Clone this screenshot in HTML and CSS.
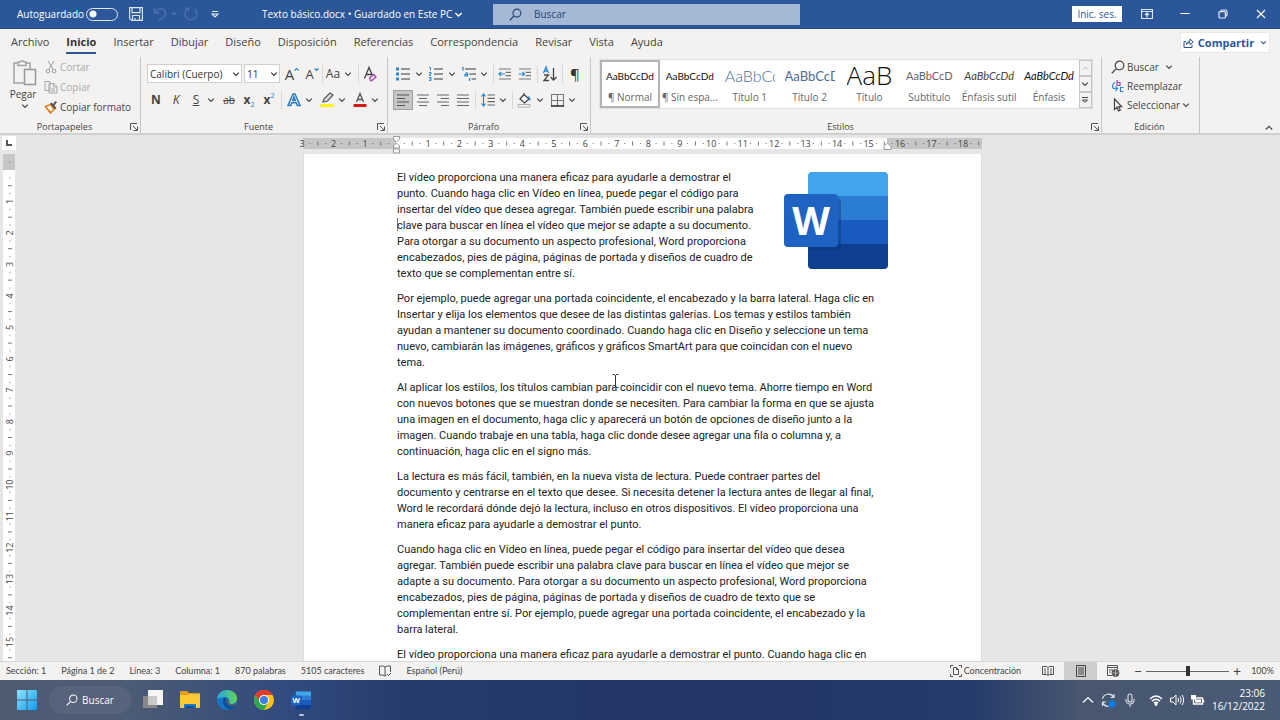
FILE: index.html
```html
<!DOCTYPE html>
<html lang="es">
<head>
<meta charset="utf-8">
<title>Texto básico.docx</title>
<link rel="stylesheet" href="styles.css">
</head>
<body>
<svg class="defs" aria-hidden="true">
  <symbol id="chev" viewBox="0 0 8 8"><path d="M1.2 2.6 4 5.4 6.8 2.6" fill="none" stroke="currentColor" stroke-width="1.2"/></symbol>
  <symbol id="launch" viewBox="0 0 8 8"><path d="M.5 7V.5H7M3 3l4 4M7.5 3.500v4h-4" fill="none" stroke="#555"/></symbol>
  <symbol id="lens" viewBox="0 0 14 14"><circle cx="8.500" cy="5.500" r="4.300" fill="none" stroke="currentColor" stroke-width="1.200"/><path d="M5.400 8.600.8 13.200" stroke="currentColor" stroke-width="1.300"/></symbol>
  <symbol id="wordlogo" viewBox="0 0 104 97">
    <clipPath id="sheet"><rect x="24" y="0" width="80" height="97" rx="4"/></clipPath>
    <g clip-path="url(#sheet)"><path fill="#41a5ee" d="M24 0h80v25H24z"/><path fill="#2b7cd3" d="M24 24h80v25H24z"/><path fill="#185abd" d="M24 48h80v25H24z"/><path fill="#103f91" d="M24 72h80v25H24z"/><path fill="#0b2f6e" opacity=".4" d="M24 26h29a4 4 0 0 1 4 4v44a4 4 0 0 1-4 4H24z"/></g>
    <rect y="22" width="54" height="53" rx="4" fill="#1f63c2"/>
    <text x="27" y="63" text-anchor="middle" font-family="Open Sans, sans-serif" font-weight="700" font-size="39" fill="#fff">W</text>
  </symbol>
</svg>

<header class="titlebar">
  <label class="autosave"><span>Autoguardado</span><input type="checkbox" class="toggle"></label>
  <div class="quick">
    <button aria-label="Guardar"><svg width="14" height="14" viewBox="0 0 14 14" fill="none" stroke="#d9e3f3" stroke-width="1.200"><path d="M.6.6h12.800v12.800H2.600L.6 11.400zM3 .6v5h8v-5M3.500 13.400V8.500h7v4.900M6 11v2"/></svg></button>
    <button aria-label="Deshacer" class="dim undo"><svg width="24" height="14" viewBox="0 0 24 14" fill="none" stroke="currentColor" stroke-width="1.300"><path d="M1.500 1v5h5M1.500 6C4 1.500 9 .5 11.500 3.500s1 6-5.500 10M19 5.500l2 2 2-2"/></svg></button>
    <button aria-label="Rehacer" class="dim"><svg width="14" height="14" viewBox="0 0 14 14" fill="none" stroke="currentColor" stroke-width="1.300"><path d="M4 1.500A6 6 0 1 0 10.500 2M1 1.200h3.500v3.500"/></svg></button>
    <button aria-label="Personalizar" class="more"><svg width="8" height="8" viewBox="0 0 8 8" fill="none" stroke="#e4ebf6" stroke-width="1.100"><path d="M1 1.500h6M1 4l3 3 3-3z"/></svg></button>
  </div>
  <button class="doctitle">Texto básico.docx • Guardado en Este PC <svg width="9" height="9"><use href="#chev"/></svg></button>
  <label class="search"><svg width="13" height="13"><use href="#lens"/></svg><input type="text" placeholder="Buscar" aria-label="Buscar"></label>
  <div class="window">
    <button class="signin">Inic. ses.</button>
    <button aria-label="Opciones de cinta"><svg width="12" height="10" viewBox="0 0 12 10" fill="none" stroke="#dce6f4"><path d="M.5.5h11v9H.5zM.5 2.500h11M6 8.500v-4M4 6l2-2 2 2" stroke-width="1.200"/></svg></button>
    <button aria-label="Minimizar"><svg width="10" height="10" viewBox="0 0 10 10"><path d="M.5 4.500h9" stroke="#fff"/></svg></button>
    <button aria-label="Restaurar"><svg width="10" height="10" viewBox="0 0 10 10" fill="none" stroke="#e4ebf6" stroke-width="1.200"><rect x="1" y="2.600" width="6.400" height="6.400" rx="1"/><path d="M3 2.500V1.700Q3 1 4 1h3.500Q9 1 9 2.500V6q0 1-1 1"/></svg></button>
    <button aria-label="Cerrar"><svg width="10" height="10" viewBox="0 0 10 10"><path d="m1 1 8 8M9 1 1 9" stroke="#fff" stroke-width="1.100"/></svg></button>
  </div>
</header>

<nav class="tabs">
  <a href="#archivo">Archivo</a><a href="#inicio" class="active">Inicio</a><a href="#insertar">Insertar</a><a href="#dibujar">Dibujar</a><a href="#diseno">Diseño</a><a href="#disposicion">Disposición</a><a href="#referencias">Referencias</a><a href="#correspondencia">Correspondencia</a><a href="#revisar">Revisar</a><a href="#vista">Vista</a><a href="#ayuda">Ayuda</a>
  <button class="share"><svg width="11" height="11" viewBox="0 0 11 11" fill="none" stroke="#2b579a"><path d="M3 4.500H1v6h8v-3M3.500 7.500C3.500 5 5 4 7 4V2l3.300 3L7 7.500v-2C5.500 5.500 4.500 6 3.500 7.500z"/></svg>Compartir<svg class="sharechev" width="7" height="7"><use href="#chev"/></svg></button>
</nav>

<section class="ribbon">
  <div class="group clipboard">
    <div class="body">
      <button class="paste"><svg width="26" height="27" viewBox="0 0 26 27" fill="#f3f2f1" stroke="#a3a3a3" stroke-width="1.500"><path d="M2 4h16v20H2z"/><path d="M6 6.500V3h2a2.200 2.200 0 0 1 4 0h2v3.500z"/><path d="M12.500 10.500h11v15h-11z" stroke="#999"/></svg>Pegar<svg width="8" height="8"><use href="#chev"/></svg></button>
      <div class="stack">
        <button class="off"><svg width="14" height="14" viewBox="0 0 14 14" fill="none" stroke="#a6a6a6" stroke-width="1.100"><path d="m4 1 5 8M10 1 5 9"/><circle cx="4" cy="11" r="1.800"/><circle cx="10" cy="11" r="1.800"/></svg>Cortar</button>
        <button class="off"><svg width="14" height="14" viewBox="0 0 14 14" fill="#f3f2f1" stroke="#a6a6a6"><path d="M1 1.500h5v9H1zM5 3.500h5l3 3v6.500H5zM9.500 3.500V7H13M7 9h4M7 11h4"/></svg>Copiar</button>
        <button><svg width="14" height="14" viewBox="0 0 14 14"><path d="m1.500 6.500 5-2 3.500 5-3.500 3.500z" fill="#fff" stroke="#e07b1f" stroke-width="1.500"/><path d="m2 8 5 4" stroke="#e07b1f"/><path d="m6 3.500 5 6 1.500-1.500-2-2.500L13 2l-1.500-1L9 4 7.500 2.500z" fill="#555"/></svg>Copiar formato</button>
      </div>
    </div>
    <footer><span>Portapapeles</span><button class="launch" aria-label="Portapapeles"><svg width="8" height="8"><use href="#launch"/></svg></button></footer>
  </div>

  <div class="group font">
    <div class="body rows">
      <div class="row">
        <span class="combo family"><select aria-label="Fuente"><option>Calibri (Cuerpo)</option></select><svg width="8" height="8"><use href="#chev"/></svg></span>
        <span class="combo size"><select aria-label="Tamaño"><option>11</option></select><svg width="8" height="8"><use href="#chev"/></svg></span>
        <button class="ic grow">A<svg width="5" height="5" viewBox="0 0 5 5"><path d="M.5 3.500 2.500 1.500l2 2" fill="none" stroke="#2a86cf" stroke-width="1.200"/></svg></button>
        <button class="ic grow small">A<svg width="5" height="5" viewBox="0 0 5 5"><path d="M.5 1.500l2 2 2-2" fill="none" stroke="#2a86cf" stroke-width="1.200"/></svg></button>
        <i class="sep"></i>
        <button class="ic">Aa</button><button class="dd" aria-label="Más"><svg width="8" height="8"><use href="#chev"/></svg></button>
        <i class="sep gap"></i>
        <button class="ic" aria-label="Borrar formato"><svg width="20" height="20" viewBox="0 0 20 20"><path d="M3.500 14.500 8 3.500l3.500 8M5.500 10.500h5" fill="none" stroke="#444" stroke-width="1.300"/><path d="m8.500 14 4-3.500 2.500 2.500-4 3.500H9.500z" fill="#f3f2f1" stroke="#a646b5" stroke-width="1.300"/></svg></button>
      </div>
      <div class="row">
        <button class="ic"><b>N</b></button><button class="ic"><em>K</em></button><button class="ic"><u>S</u></button><button class="dd" aria-label="Más"><svg width="8" height="8"><use href="#chev"/></svg></button>
        <button class="ic strike"><s>ab</s></button><button class="ic script"><b>x</b><sub>2</sub></button><button class="ic script"><b>x</b><sup>2</sup></button>
        <i class="sep gap"></i>
        <button class="ic" aria-label="Efectos"><svg width="20" height="20" viewBox="0 0 20 20"><path d="m4 15.500 5-11.500h2l5 11.500h-2.700l-1-2.800H7.700l-1 2.800zM8.700 10.500h2.600L10 7z" fill="#fff" stroke="#2a79c4" stroke-width="1.500"/></svg></button><button class="dd" aria-label="Más"><svg width="8" height="8"><use href="#chev"/></svg></button>
        <button class="ic" aria-label="Resaltar"><svg width="20" height="20" viewBox="0 0 20 20"><path d="m6 12 1-3 6-6 3 2-5.500 6L6 12z" fill="#ddd" stroke="#555" stroke-width="1.200"/><path d="M3.500 14h13v3h-13z" fill="#fbf512"/></svg></button><button class="dd" aria-label="Más"><svg width="8" height="8"><use href="#chev"/></svg></button>
        <button class="ic" aria-label="Color de fuente"><svg width="20" height="20" viewBox="0 0 20 20"><path d="m6.500 12 3.500-8.500 3.500 8.500M7.500 9.500h5" fill="none" stroke="#555" stroke-width="1.300"/><path d="M3.500 14h13v3h-13z" fill="#d11a1a"/></svg></button><button class="dd" aria-label="Más"><svg width="8" height="8"><use href="#chev"/></svg></button>
      </div>
    </div>
    <footer><span>Fuente</span><button class="launch" aria-label="Fuente"><svg width="8" height="8"><use href="#launch"/></svg></button></footer>
  </div>

  <div class="group para">
    <div class="body rows">
      <div class="row">
        <button class="ic" aria-label="Viñetas"><svg width="20" height="20" viewBox="0 0 20 20"><path d="M3 3.500h3v3H3zM3 8.500h3v3H3zM3 13.500h3v3H3z" fill="#2a86cf"/><path d="M8 5h9M8 10h9M8 15h9" stroke="#777" stroke-width="1.300"/></svg></button><button class="dd w12" aria-label="Más"><svg width="8" height="8"><use href="#chev"/></svg></button>
        <button class="ic" aria-label="Numeración"><svg width="20" height="20" viewBox="0 0 20 20"><path d="M3 3.500h1.500v3M3 8.500h2V10H3.500v1.500H5M3 13.500h2v3H3M3.500 15H5" fill="none" stroke="#2a86cf"/><path d="M8 5h9M8 10h9M8 15h9" stroke="#777" stroke-width="1.300"/></svg></button><button class="dd w12" aria-label="Más"><svg width="8" height="8"><use href="#chev"/></svg></button>
        <button class="ic" aria-label="Lista multinivel"><svg width="20" height="20" viewBox="0 0 20 20"><path d="M3 3.500h1v3M6 9h2.500v3H6v-1.500h2M10.500 14v3" fill="none" stroke="#2a86cf" stroke-width="1.200"/><path d="M6 5h11M10.500 10H17M12.500 15H17" stroke="#777" stroke-width="1.300"/></svg></button><button class="dd" aria-label="Más"><svg width="8" height="8"><use href="#chev"/></svg></button>
        <i class="sep slim"></i>
        <button class="ic" aria-label="Disminuir sangría"><svg width="20" height="20" viewBox="0 0 20 20"><path d="M4 5h12M10.500 8.300H16M10.500 11.700H16M4 15h12" stroke="#777" stroke-width="1.200"/><path d="M10 10H4m2.200-2.200L4 10l2.200 2.200" fill="none" stroke="#2a86cf" stroke-width="1.200"/></svg></button><button class="ic" aria-label="Aumentar sangría"><svg width="20" height="20" viewBox="0 0 20 20"><path d="M4 5h12M10.500 8.300H16M10.500 11.700H16M4 15h12" stroke="#777" stroke-width="1.200"/><path d="M3.500 10h6M7.300 7.800 9.500 10l-2.200 2.200" fill="none" stroke="#2a86cf" stroke-width="1.200"/></svg></button>
        <i class="sep gap"></i>
        <button class="ic" aria-label="Ordenar"><svg width="20" height="20" viewBox="0 0 20 20" fill="none" stroke-width="1.300"><path d="m3.500 9 2.500-6 2.500 6M4.500 7h3" stroke="#2a86cf"/><path d="M4 11h4.500L4 16.500h5" stroke="#444"/><path d="M13.500 4v12m-3-3 3 3 3-3" stroke="#444"/></svg></button>
        <i class="sep gap"></i>
        <button class="ic pil">¶</button>
      </div>
      <div class="row">
        <button class="ic on" aria-label="Izquierda"><svg width="18" height="18" viewBox="0 0 18 18"><path d="M3 4h12M3 7.500h8M3 11h12M3 14.500h8" stroke="#555" stroke-width="1.200"/></svg></button><button class="ic" aria-label="Centrar"><svg width="18" height="18" viewBox="0 0 18 18"><path d="M3 4h12M5 7.500h8M3 11h12M5 14.500h8" stroke="#666" stroke-width="1.200"/></svg></button><button class="ic" aria-label="Derecha"><svg width="18" height="18" viewBox="0 0 18 18"><path d="M3 4h12M7 7.500h8M3 11h12M7 14.500h8" stroke="#666" stroke-width="1.200"/></svg></button><button class="ic" aria-label="Justificar"><svg width="18" height="18" viewBox="0 0 18 18"><path d="M3 4h12M3 7.500h12M3 11h12M3 14.500h12" stroke="#666" stroke-width="1.200"/></svg></button>
        <i class="sep gap"></i>
        <button class="ic" aria-label="Interlineado"><svg width="20" height="20" viewBox="0 0 20 20" fill="none"><path d="M5.500 4.500v11M3.500 6.500l2-2.500 2 2.500M3.500 13.500l2 2.500 2-2.500" stroke="#2a86cf" stroke-width="1.200"/><path d="M9.500 5H17M9.500 8.300H17M9.500 11.700H17M9.500 15H17" stroke="#666" stroke-width="1.200"/></svg></button><button class="dd" aria-label="Más"><svg width="8" height="8"><use href="#chev"/></svg></button>
        <i class="sep slim"></i>
        <button class="ic" aria-label="Sombreado"><svg width="20" height="20" viewBox="0 0 20 20"><path d="m6 9 4-4.500 5 4.500-4.500 4zM10 4.500V3" fill="#fff" stroke="#444" stroke-width="1.300"/><path d="M14 6q3 1 2.500 5-2-1-2.500-5z" fill="#2a86cf"/><path d="M4 14.500h12v2.500H4z" fill="#fff" stroke="#aaa"/></svg></button><button class="dd w12" aria-label="Más"><svg width="8" height="8"><use href="#chev"/></svg></button>
        <button class="ic" aria-label="Bordes"><svg width="20" height="20" viewBox="0 0 20 20" fill="none"><path d="M4.500 16V4.500h12V16M10.500 4.500V16M4.500 10.500h12" stroke="#777" stroke-width="1.100"/><path d="M4 16h13" stroke="#333" stroke-width="1.600"/></svg></button><button class="dd" aria-label="Más"><svg width="8" height="8"><use href="#chev"/></svg></button>
      </div>
    </div>
    <footer><span>Párrafo</span><button class="launch" aria-label="Párrafo"><svg width="8" height="8"><use href="#launch"/></svg></button></footer>
  </div>

  <div class="group styles">
    <div class="body">
      <div class="gallery">
        <button class="sel"><span class="sample">AaBbCcDd</span><span>¶ Normal</span></button>
        <button><span class="sample">AaBbCcDd</span><span>¶ Sin espa...</span></button>
        <button><span class="sample h1">AaBbCc</span><span>Título 1</span></button>
        <button><span class="sample h2">AaBbCcD</span><span>Título 2</span></button>
        <button><span class="sample big">AaB</span><span>Título</span></button>
        <button><span class="sample subt">AaBbCcD</span><span>Subtítulo</span></button>
        <button><span class="sample soft">AaBbCcDd</span><span>Énfasis sutil</span></button>
        <button><span class="sample emph">AaBbCcDd</span><span>Énfasis</span></button>
        <div class="scroll">
          <button aria-label="Arriba" class="off"><svg width="7" height="7" viewBox="0 0 8 8"><path d="M1.500 5 4 2.500 6.500 5" fill="none" stroke="currentColor"/></svg></button>
          <button aria-label="Abajo"><svg width="8" height="8"><use href="#chev"/></svg></button>
          <button aria-label="Más estilos"><svg width="8" height="8" viewBox="0 0 8 8" fill="none" stroke="#444"><path d="M1 1.500h6M1.500 4 4 6.500 6.500 4z"/></svg></button>
        </div>
      </div>
    </div>
    <footer><span>Estilos</span><button class="launch" aria-label="Estilos"><svg width="8" height="8"><use href="#launch"/></svg></button></footer>
  </div>

  <div class="group edit">
    <div class="body stack">
      <button><svg width="14" height="14"><use href="#lens"/></svg>Buscar<svg class="far" width="8" height="8"><use href="#chev"/></svg></button>
      <button><svg width="14" height="14" viewBox="0 0 14 14" fill="none" stroke-width="1.200"><path d="M6 1v5.500h3v-3H6" stroke="#a646b5"/><path d="M4 3.500C1 5 1 8 2.500 9.500H6M4.500 7.500l2 2-2 2.500M12.500 8.500h-3v4h3" stroke="#2a86cf"/></svg>Reemplazar</button>
      <button><svg width="14" height="14" viewBox="0 0 14 14" fill="none" stroke="#444" stroke-width="1.200"><path d="M3.500 1v10.500L6 9.300l1.500 3.700 1.800-.8-1.600-3.500h3z"/></svg>Seleccionar<svg width="8" height="8"><use href="#chev"/></svg></button>
    </div>
    <footer><span>Edición</span></footer>
  </div>
  <button class="collapse" aria-label="Contraer cinta"><svg width="8" height="8" viewBox="0 0 8 8"><path d="M.8 5.500 4 2.300l3.200 3.200" fill="none" stroke="#444" stroke-width="1.200"/></svg></button>
</section>

<main class="workspace">
  <aside>
    <button class="tabstop" aria-label="Tabulación"><svg width="6" height="6" viewBox="0 0 6 6"><path d="M1 0v5h5" fill="none" stroke="#555" stroke-width="2"/></svg></button>
    <svg class="vruler" id="vruler"></svg>
  </aside>
  <div class="canvas">
    <div class="hruler"><svg id="hruler"></svg></div>
    <article class="page">
      <svg class="picture" width="104" height="97" role="img" aria-label="Word"><use href="#wordlogo"/></svg>
      <p>El vídeo proporciona una manera eficaz para ayudarle a demostrar el<br>punto. Cuando haga clic en Vídeo en línea, puede pegar el código para<br>insertar del vídeo que desea agregar. También puede escribir una palabra<br><span class="caret"></span>clave para buscar en línea el vídeo que mejor se adapte a su documento.<br>Para otorgar a su documento un aspecto profesional, Word proporciona<br>encabezados, pies de página, páginas de portada y diseños de cuadro de<br>texto que se complementan entre sí.</p>
      <p>Por ejemplo, puede agregar una portada coincidente, el encabezado y la barra lateral. Haga clic en<br>Insertar y elija los elementos que desee de las distintas galerías. Los temas y estilos también<br>ayudan a mantener su documento coordinado. Cuando haga clic en Diseño y seleccione un tema<br>nuevo, cambiarán las imágenes, gráficos y gráficos SmartArt para que coincidan con el nuevo<br>tema.</p>
      <p>Al aplicar los estilos, los títulos cambian para coincidir con el nuevo tema. Ahorre tiempo en Word<br>con nuevos botones que se muestran donde se necesiten. Para cambiar la forma en que se ajusta<br>una imagen en el documento, haga clic y aparecerá un botón de opciones de diseño junto a la<br>imagen. Cuando trabaje en una tabla, haga clic donde desee agregar una fila o columna y, a<br>continuación, haga clic en el signo más.</p>
      <p>La lectura es más fácil, también, en la nueva vista de lectura. Puede contraer partes del<br>documento y centrarse en el texto que desee. Si necesita detener la lectura antes de llegar al final,<br>Word le recordará dónde dejó la lectura, incluso en otros dispositivos. El vídeo proporciona una<br>manera eficaz para ayudarle a demostrar el punto.</p>
      <p>Cuando haga clic en Vídeo en línea, puede pegar el código para insertar del vídeo que desea<br>agregar. También puede escribir una palabra clave para buscar en línea el vídeo que mejor se<br>adapte a su documento. Para otorgar a su documento un aspecto profesional, Word proporciona<br>encabezados, pies de página, páginas de portada y diseños de cuadro de texto que se<br>complementan entre sí. Por ejemplo, puede agregar una portada coincidente, el encabezado y la<br>barra lateral.</p>
      <p>El vídeo proporciona una manera eficaz para ayudarle a demostrar el punto. Cuando haga clic en</p>
      <svg class="ibeam" width="7" height="14" viewBox="0 0 7 14"><path d="M.5.5h2l1 1 1-1h2M3.500 1v12M.5 13.500h2l1-1 1 1h2" fill="none" stroke="#333"/></svg>
    </article>
  </div>
</main>

<footer class="status">
  <span>Sección: 1</span><span>Página 1 de 2</span><span>Línea: 3</span><span>Columna: 1</span><span>870 palabras</span><span>5105 caracteres</span>
  <svg width="12" height="12" viewBox="0 0 12 12" fill="none" stroke="#555"><path d="M6 2Q4 .5.500 1v9Q4 9.500 6 11V2Q8 .5 11.500 1v6M6 11l1.500-1M8 9l1.500 1.500L12 8"/></svg><span>Español (Perú)</span>
  <div class="views">
    <button class="focus"><svg width="12" height="12" viewBox="0 0 12 12" fill="none" stroke="#555"><path d="M.5 3V.5H3M.5 9v2.500H3M9 .5h2.500V3M9 11.500h2.500V9M3.500 2.500h3l2 2v5h-5zM6.500 2.500v2h2"/></svg>Concentración</button>
    <button class="view" aria-label="Lectura"><svg width="12" height="12" viewBox="0 0 12 12" fill="none" stroke="#555"><path d="M.5 1.500H5l1 1 1-1h4.500v8H7l-1 1-1-1H.5zM6 2.500v8M2 4h2M2 6h2M2 8h2M8 4h2M8 6h2M8 8h2"/></svg></button>
    <button class="view on" aria-label="Impresión"><svg width="10" height="12" viewBox="0 0 10 12" fill="none" stroke="#444"><path d="M.5.5h9v11h-9zM2 3h6M2 5h6M2 7h6M2 9h6"/></svg></button>
    <button class="view" aria-label="Web"><svg width="13" height="12" viewBox="0 0 13 12" fill="none" stroke="#555"><path d="M5 10.500H.5v-10h10V4M.5 2.500h10M2 5h4M2 7h2"/><circle cx="8.500" cy="8" r="3.500" fill="#555"/><path d="M5.500 8h6M8.500 5v6" stroke="#ccc" stroke-width=".7"/></svg></button>
    <button class="zoom">−</button><input type="range" class="slider" aria-label="Zoom" min="0" max="100" value="50"><button class="zoom">+</button><span class="pct">100%</span>
  </div>
</footer>

<footer class="taskbar">
  <button aria-label="Inicio"><svg width="20" height="20" viewBox="0 0 20 20"><defs><linearGradient id="win" x2="1" y2="1"><stop stop-color="#8be3ff"/><stop offset="1" stop-color="#129cee"/></linearGradient></defs><path d="M0 1q0-1 1-1h8.500v9.500H0zM10.500 0H19q1 0 1 1v8.500h-9.500zM0 10.500h9.500V20H1q-1 0-1-1zM10.500 10.500H20V19q0 1-1 1h-8.500z" fill="url(#win)"/></svg></button>
  <button class="find"><svg width="12" height="12"><use href="#lens"/></svg>Buscar</button>
  <div class="apps">
    <button aria-label="Vista de tareas"><svg width="20" height="20" viewBox="0 0 20 20"><path d="M5 0h15v15H5z" fill="#f5f5f5"/><path d="M0 6h14v12H0z" fill="#888"/><path d="M5 6h9v9H5z" fill="#c9c9c9"/></svg></button>
    <button aria-label="Explorador"><svg width="20" height="20" viewBox="0 0 20 20"><path d="M0 2q0-1 1-1h6l2 2h10q1 0 1 1v5H0z" fill="#e0a012"/><path d="M0 5h8l2-1h10v13q0 1-1 1H1q-1 0-1-1z" fill="#fcc934"/><path d="M4 18v-3q0-1 1-1h10q1 0 1 1v3z" fill="#1976c5"/><path d="M6 16h8v2H6z" fill="#0b4f8f"/></svg></button>
    <button aria-label="Edge"><svg width="20" height="20" viewBox="0 0 20 20"><defs><linearGradient id="edge"><stop stop-color="#27a5e8"/><stop offset="1" stop-color="#65d65a"/></linearGradient></defs><circle cx="10" cy="10" r="10" fill="#1576c7"/><path d="M0 9C1 3 5 0 10 0c6 0 10 4 10 8.500 0 4-3 5.500-6 5.500-2.500 0-2.500-1-2-2 1-2-.5-5-4-5-3 0-6 1-8 2z" fill="url(#edge)"/><path d="M8 7C4 10 6 18 13 19.500c3-.7 5-2.500 6-4.500-4 2-9 1-10-3-.3-2 .5-3 .5-3z" fill="#0c4f9b"/><path d="M9.500 9C8 11 9 14 12 15.500c3 1 5 .5 7-.5l.5-2C17 14.500 12.500 14.500 12 12.500 12.500 11 11 9 9.500 9z" fill="#4c5c75"/></svg></button>
    <button aria-label="Chrome"><svg width="20" height="20" viewBox="0 0 20 20"><circle cx="10" cy="10" r="10" fill="#fbc116"/><path d="M1.300 5A10 10 0 0 1 18.700 5H10a5 5 0 0 0-4.300 7.500z" fill="#e33b2e"/><path d="M1.300 5A10 10 0 0 0 10 20l4.300-7.500a5 5 0 0 1-8.600 0z" fill="#2da94f"/><circle cx="10" cy="10" r="5" fill="#fff"/><circle cx="10" cy="10" r="4" fill="#3b7ded"/></svg></button>
    <button aria-label="Word" class="running"><svg width="20" height="19"><use href="#wordlogo"/></svg></button>
  </div>
  <div class="tray">
    <svg width="12" height="12" viewBox="0 0 12 12"><path d="m1 8.500 5-5 5 5" fill="none" stroke="#fff" stroke-width="1.200"/></svg>
    <svg width="15" height="15" viewBox="0 0 15 15" fill="none" stroke="#dde2ea" stroke-width="1.200"><path d="M1.500 6A6 6 0 0 1 12.500 4M13 1v3.500H9.500M1.500 9q1 4 6 4.500M1.500 13V9H5"/><circle cx="11" cy="11" r="3.200" fill="#0f7be0" stroke="#0f7be0"/></svg>
    <svg class="mic" width="10" height="14" viewBox="0 0 10 14" fill="none" stroke="#dde2ea" stroke-width="1.100"><rect x="3" y="1" width="4" height="8" rx="2"/><path d="M.8 6q0 5 4.200 5t4.200-5M5 11v3"/></svg>
    <svg width="14" height="12" viewBox="0 0 14 12" fill="none" stroke="#fff" stroke-width="1.300"><path d="M1 5q6-6 12 0M3 7.300q4-4 8 0M5 9.300q2-2 4 0"/><circle cx="7" cy="10.500" r=".8" fill="#fff"/></svg>
    <svg width="14" height="12" viewBox="0 0 14 12" fill="none" stroke="#fff"><path d="M.5 4h2.500L6 1v10L3 8H.5zM8 4q1.200 2 0 4M10 2.500q2.500 3.500 0 7M12 1q3.300 5 0 10"/></svg>
    <svg width="14" height="12" viewBox="0 0 14 12"><path d="M2.500 4h9v6h-9zM12.500 5.500v3" fill="none" stroke="#fff" stroke-width="1.300"/><path d="M4 5.500h6v3H4zM0 1h5v4.500H0z" fill="#fff"/></svg>
    <time>23:06<br>16/12/2022</time>
  </div>
</footer>
<script src="ruler.js"></script>
</body>
</html>
```
FILE: styles.css
```css
* { box-sizing: border-box; }
body { margin: 0; height: 100vh; overflow: hidden; display: flex; flex-direction: column; font: 10px/16px "Open Sans", "Noto Sans", sans-serif; color: #444; background: #e6e6e6; }
button, input, select { font: inherit; color: inherit; border: 0; background: none; padding: 0; margin: 0; }
button { display: flex; align-items: center; justify-content: center; white-space: nowrap; }
svg { flex: none; display: block; }
.defs { position: absolute; width: 0; height: 0; }

.titlebar { flex: none; height: 29px; background: #2b579a; border-bottom: 1px solid #244c8a; display: flex; align-items: center; color: #fff; padding-left: 17px; }
.autosave { display: flex; align-items: center; width: 101px; white-space: nowrap; }
.toggle { appearance: none; margin-left: auto; width: 32px; height: 13px; border: 1px solid #dfe7f3; border-radius: 7px; background: radial-gradient(circle at 6px 5px, #fff 3px, transparent 4px); }
.quick { display: flex; align-items: center; margin-left: 11px; width: 133px; }
.quick .undo { margin: 0 7px 0 10px; }
.quick .more { margin-left: 13px; }
.dim { color: #4c72ad; }
.doctitle { width: 197px; justify-content: flex-start; gap: 2px; }
.search { flex: 0 1 307px; margin-left: 34px; height: 21px; background: #a5b9d7; color: #27436f; display: flex; align-items: center; padding-left: 16px; gap: 12px; }
.search input { flex: 1; min-width: 0; outline: 0; }
.search input::placeholder { color: #27436f; opacity: 1; }
.window { margin-left: auto; display: flex; align-items: center; }
.window button { width: 38px; }
.window .signin { width: 50px; height: 16px; background: #fff; color: #2b579a; margin-right: 6px; }

.tabs { flex: none; height: 27px; display: flex; align-items: center; background: #f3f2f1; padding-left: 11px; font-size: 11px; gap: 17px; white-space: nowrap; }
.tabs a { color: #444; text-decoration: none; height: 23px; line-height: 21px; }
.tabs .active { font-weight: 700; color: #333; border-bottom: 2px solid #2b579a; }
.share { margin: 0 11px 0 auto; width: 88px; height: 19px; background: #fff; color: #2b579a; font-weight: 700; gap: 4px; box-shadow: 0 0 1px #bbb; }
.sharechev { margin-left: 2px; }

.ribbon { flex: none; height: 79px; display: flex; background: #f3f2f1; border-bottom: 2px solid #d2d0ce; position: relative; }
.group { flex: none; display: flex; flex-direction: column; border-right: 1px solid #c8c6c4; margin-top: 1px; }
.body { flex: 1; display: flex; }
.group footer { height: 13px; display: flex; align-items: center; font-size: 9px; padding-right: 2px; }
.group footer span { flex: 1; text-align: center; }
.launch { width: 9px; }
.clipboard { width: 141px; }
.font { width: 247px; }
.para { width: 203px; }
.styles { flex: 1; min-width: 0; }
.edit { width: 98px; margin-right: 80px; }
.off { color: #aaa; }
.paste { width: 42px; margin-left: 2px; flex-direction: column; justify-content: flex-start; padding-top: 2px; }
.paste svg { margin-left: 3px; }
.stack { display: flex; flex-direction: column; }
.stack button { height: 20px; gap: 2px; justify-content: flex-start; }
.rows { flex-direction: column; padding: 6px 0 0 5px; gap: 5px; }
.row { display: flex; align-items: center; height: 21px; }
.combo { display: grid; align-items: center; background: #fff; border: 1px solid #d2d0ce; height: 19px; margin-right: 2px; color: #333; }
.combo > * { grid-area: 1 / 1; }
.combo select { appearance: none; width: 100%; padding-left: 2px; outline: 0; }
.combo svg { justify-self: end; margin-right: 1px; pointer-events: none; }
.family { width: 95px; margin-left: 1px; }
.size { width: 36px; }
.ic { width: 20px; height: 20px; font-size: 12px; }
.dd { width: 10px; height: 20px; margin-right: 3px; }
.dd.w12 { width: 12px; margin-right: 1px; }
.sep { width: 1px; height: 18px; background: #dad8d6; }
.sep.gap { margin: 0 2px; }
.sep.slim { margin: 0 1px; }
.grow { font-size: 15px; }
.grow svg { margin-bottom: 8px; }
.grow.small { font-size: 13px; }
.strike { font-size: 10px; }
.script sub, .script sup { font-size: 7px; line-height: 8px; color: #2a86cf; }
.script sub { margin-top: 10px; }
.script sup { margin-bottom: 8px; }
.pil { font-size: 15px; color: #333; }
.on { background: #c8c6c4; box-shadow: inset 0 0 0 1px #a19f9d; }
.styles .body { padding: 2px 8px 0 8px; }
.gallery { display: flex; flex: 1; height: 50px; background: #fff; border: 1px solid #e1dfdd; }
.gallery > button { flex: 1 1 60px; min-width: 0; flex-direction: column; justify-content: flex-end; padding-bottom: 2px; border: 2px solid transparent; color: #666; }
.gallery > .sel { border-color: #b5b3b1; }
.gallery button span { line-height: 14px; }
.gallery .sample { font: 10px/28px Lato, sans-serif; color: #111; max-width: 54px; height: 28px; overflow: hidden; }
.gallery .h1 { font-size: 16px; color: #4a6d9c; font-weight: 300; max-width: 50px; }
.gallery .h2 { font-size: 13px; color: #4a6d9c; font-weight: 400; max-width: 50px; }
.gallery .big { font: 300 26px/26px "Open Sans", sans-serif; }
.gallery .subt { font-size: 11px; color: #666; }
.gallery .soft { font-size: 11px; color: #444; font-style: italic; }
.gallery .emph { font-size: 11px; font-style: italic; }
.scroll { display: grid; grid-template-rows: 1fr 1fr 1fr; width: 13px; background: #f3f2f1; }
.scroll button { border: 1px solid #c8c6c4; }
.edit .body { padding-left: 9px; }
.edit .stack button { height: 19px; }
.edit .far { margin-left: 4px; }
.collapse { position: absolute; right: 7px; bottom: 1px; }

.workspace { flex: 1; min-height: 0; display: flex; overflow: hidden; }
.workspace aside { flex: none; width: 18px; display: flex; flex-direction: column; }
.tabstop { flex: none; width: 14px; height: 14px; margin: 1px 0 4px 2px; background: #fff; }
.vruler { flex: 1; width: 12px; margin-left: 3px; }
.canvas { flex: 1; min-width: 0; display: flex; flex-direction: column; align-items: center; padding-right: 13px; }
.hruler { flex: none; width: 100%; max-width: 679px; height: 19px; padding-top: 3px; }
.hruler svg { width: 100%; height: 16px; overflow: visible; }
.page { position: relative; flex: 1; min-height: 0; width: 100%; max-width: 679px; background: #fff; border: 1px solid #dcdcdc; border-width: 0 1px; padding: 16px 93px 0; color: #222; font: 11px/16px Roboto, "Open Sans", sans-serif; white-space: nowrap; }
.page p { margin: 0 0 9px; }
.picture { float: right; margin-top: 2px; }
.caret { display: inline-block; width: 1px; height: 13px; margin-right: -1px; background: #777; vertical-align: -2px; }
.ibeam { position: absolute; left: 308px; top: 220px; }

.status { flex: none; height: 19px; background: #f3f2f1; border-top: 1px solid #d8d6d4; display: flex; align-items: center; font: 9px/16px Lato, sans-serif; color: #444; padding-left: 6px; gap: 15px; white-space: nowrap; }
.views { margin-left: auto; display: flex; align-items: center; align-self: stretch; }
.focus { gap: 2px; margin-right: 10px; }
.view { width: 33px; height: 100%; }
.view.on { background: #cfcdcb; box-shadow: none; }
.zoom { width: 16px; font-size: 14px; }
.slider { appearance: none; width: 83px; height: 12px; background: linear-gradient(#666, #666) center / 100% 1px no-repeat; }
.slider::-webkit-slider-thumb { appearance: none; width: 4px; height: 10px; background: #333; }
.pct { padding: 0 6px; }

.taskbar { flex: none; height: 40px; display: flex; align-items: center; color: #fff; padding-left: 17px; background: linear-gradient(90deg, #4e5c72 0, #4c5b75 130px, #314a7d 290px, #273c6c 400px, #223565 700px, #263b6b 970px, #48566f 1080px, #4a5b75); }
.find { width: 82px; height: 28px; border-radius: 14px; background: #56637b; gap: 4px; margin: 0 12px; }
.apps { display: flex; gap: 17px; }
.running { flex-direction: column; }
.running::after { content: ""; width: 5px; height: 2px; border-radius: 1px; background: #b5c6df; margin: 4px 0 -6px; }
.tray { margin-left: auto; padding-right: 15px; display: flex; align-items: center; gap: 7px; }
.mic { margin: 0 7px 0 2px; }
.tray time { line-height: 13px; text-align: right; }
```
FILE: ruler.js
```js
const NS = "http://www.w3.org/2000/svg";
const CM = 31.47;

function add(svg, tag, attrs, text) {
  const node = document.createElementNS(NS, tag);
  for (const key in attrs) node.setAttribute(key, attrs[key]);
  if (text !== undefined) node.textContent = text;
  svg.append(node);
}

// Numbers on each centimetre, a bar on each half and a dot on each quarter.
function marks(svg, zero, from, to, vertical, mid) {
  for (let q = from; q <= to; q++) {
    const pos = zero + q * CM / 4;
    const place = vertical ? `translate(${mid} ${pos}) rotate(-90)` : `translate(${pos} ${mid})`;
    if (q === 0) continue;
    if (q % 4 === 0) {
      add(svg, "text", { transform: place, y: 3, "text-anchor": "middle", "font-size": 9, fill: "#444" }, Math.abs(q / 4));
    } else {
      const h = q % 2 === 0 ? 4 : 1;
      add(svg, "rect", { transform: place, x: -0.5, y: -h / 2, width: 1, height: h, fill: "#777" });
    }
  }
}

const h = document.getElementById("hruler");
add(h, "rect", { x: 0, y: 0, width: 679, height: 11, fill: "#c6c6c6" });
add(h, "rect", { x: 93, y: 0, width: 491, height: 11, fill: "#fff" });
marks(h, 93.5, -12, 74, false, 5.5);
const marker = { fill: "#fff", stroke: "#999" };
add(h, "path", { d: "M90.500-1.500h6v2.500l-3 3-3-3zM93.500 5l3 3v2h-6v-2zM90.500 11h6v4h-6z", ...marker });
add(h, "path", { d: "M584.500 5l3.500 3.500v3h-7v-3z", ...marker });

const v = document.getElementById("vruler");
add(v, "rect", { x: 0, y: 0, width: 12, height: 16, fill: "#c6c6c6" });
add(v, "rect", { x: 0, y: 16, width: 12, height: "100%", fill: "#fff" });
marks(v, 16, -1, 64, true, 7);
```
